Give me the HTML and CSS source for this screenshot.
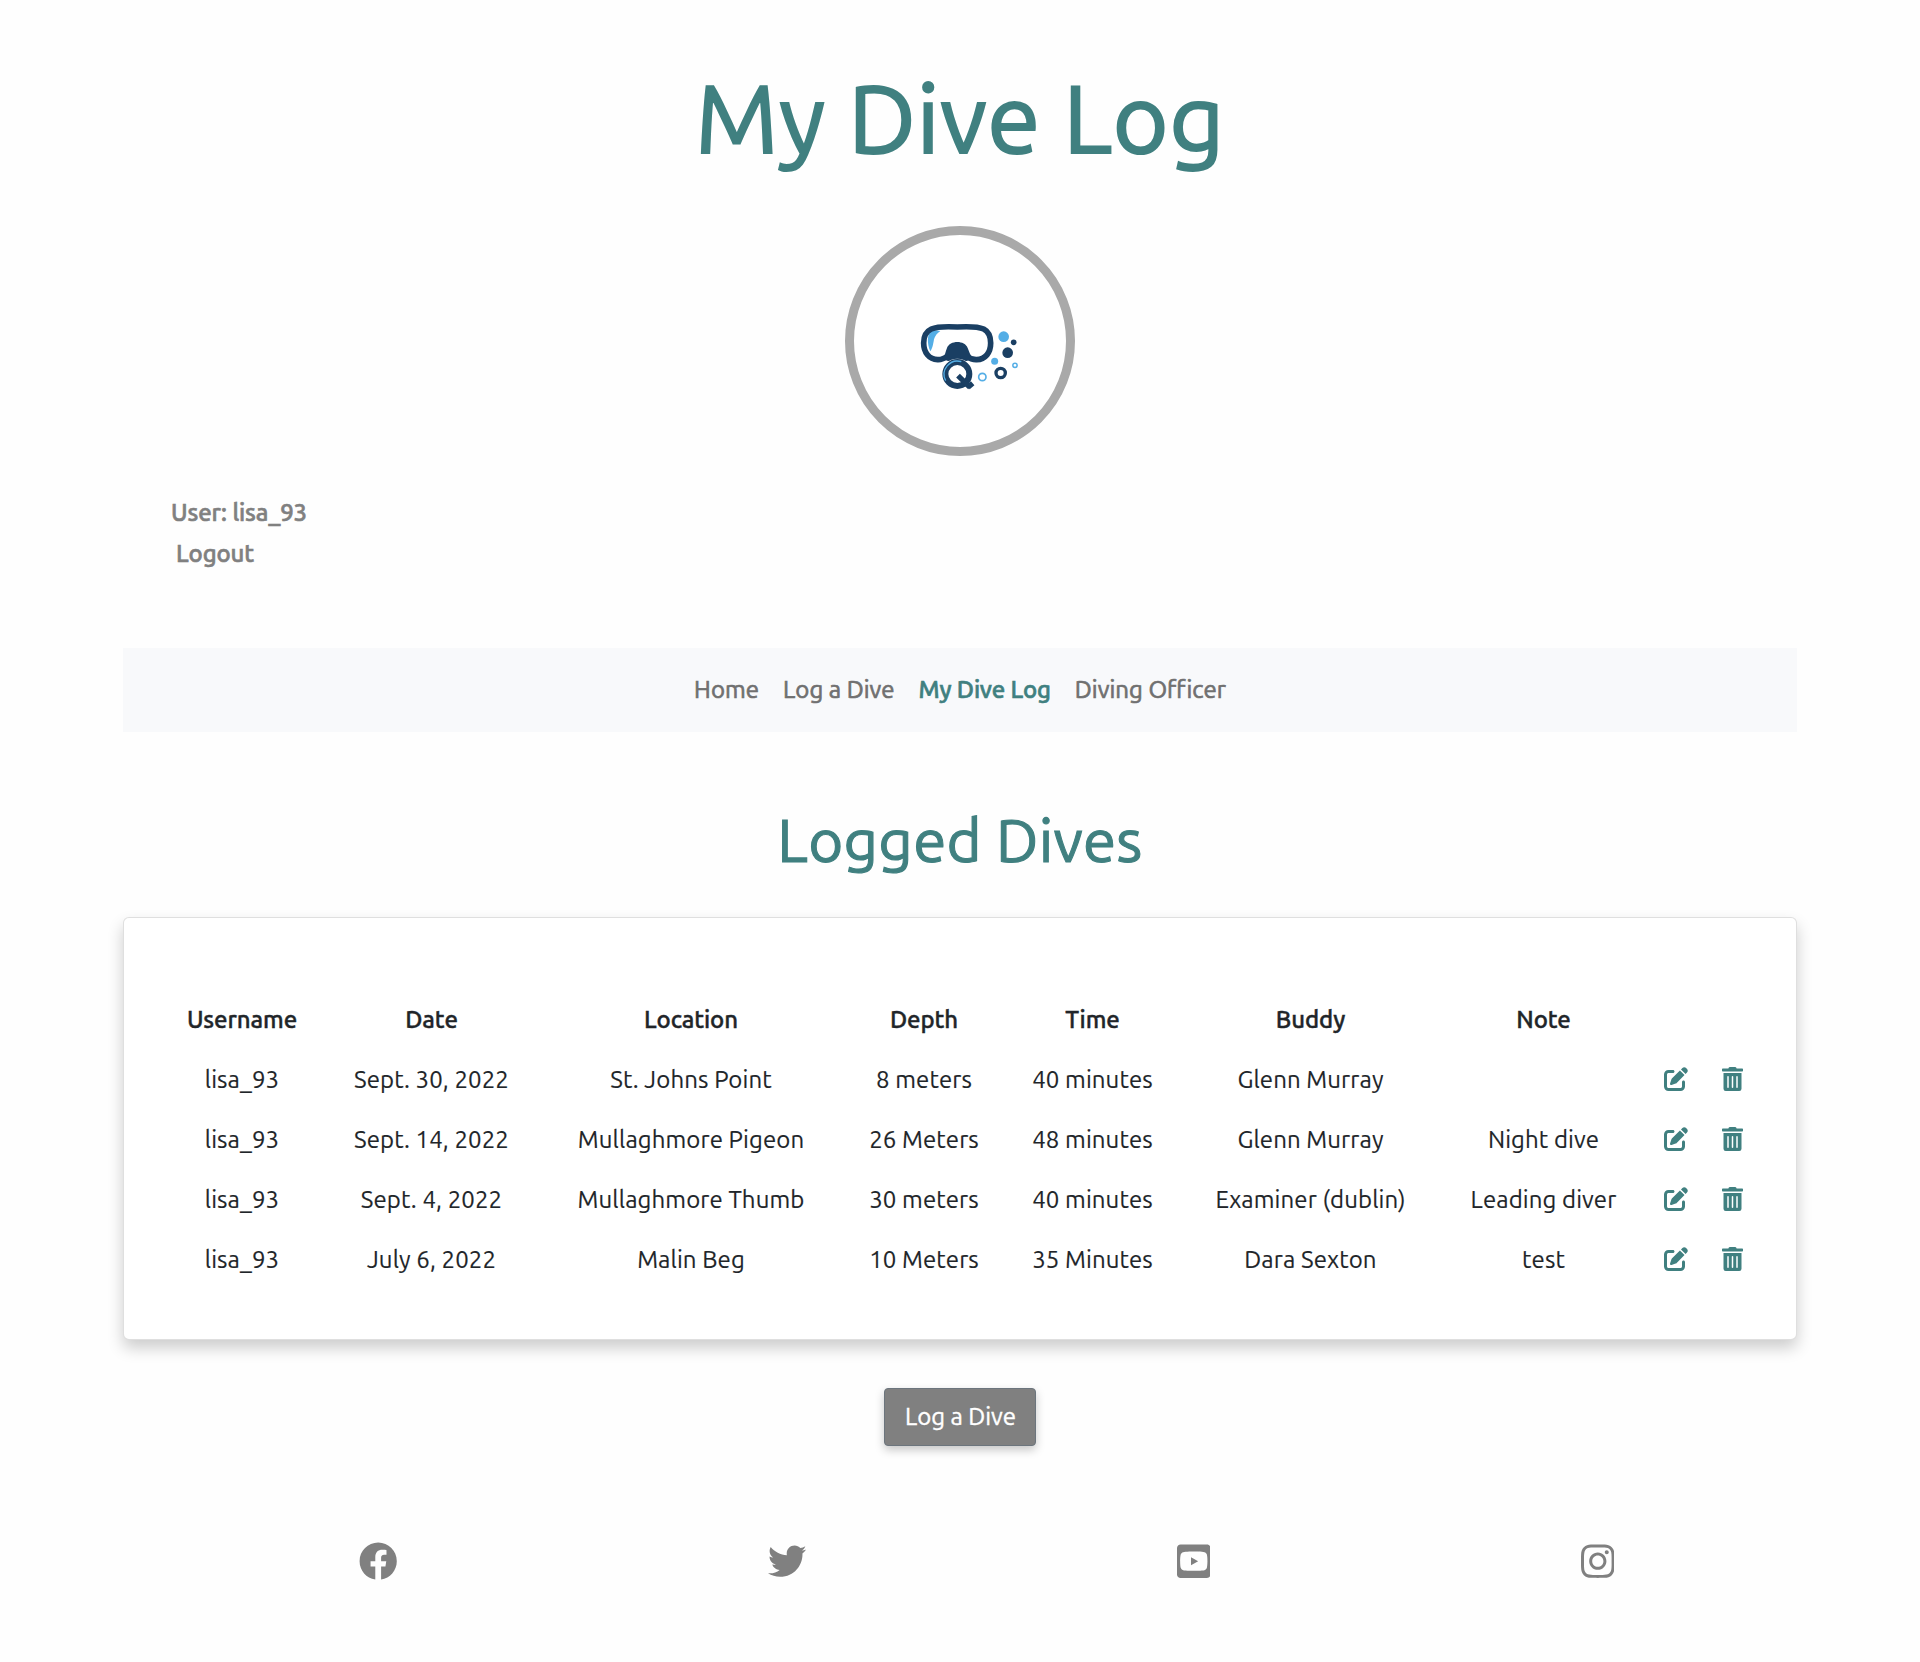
FILE: index.html
```html
<!DOCTYPE html>
<html lang="en">
<head>
<meta charset="utf-8">
<title>My Dive Log</title>
<link rel="stylesheet" href="styles.css">
</head>
<body>
<svg class="sprite" aria-hidden="true">
  <symbol id="edit" viewBox="0 0 512 512"><path d="M490.3 40.4C512.2 62.27 512.2 97.73 490.3 119.6L460.3 149.7L362.3 51.72L392.4 21.66C414.3-.2135 449.7-.2135 471.6 21.66L490.3 40.4zM172.4 241.7L339.7 74.34L437.7 172.3L270.3 339.6C264.2 345.8 256.7 350.4 248.4 353.2L159.6 382.8C150.1 385.6 141.5 383.4 135 376.1C128.6 370.5 126.4 361 129.2 352.4L158.8 263.6C161.6 255.3 166.2 247.8 172.4 241.7V241.7zM192 63.1C209.7 63.1 224 78.33 224 95.1C224 113.7 209.7 127.1 192 127.1H96C78.33 127.1 64 142.3 64 159.1V416C64 433.7 78.33 448 96 448H352C369.7 448 384 433.7 384 416V319.1C384 302.3 398.3 287.1 416 287.1C433.7 287.1 448 302.3 448 319.1V416C448 469 405 512 352 512H96C42.98 512 0 469 0 416V159.1C0 106.1 42.98 63.1 96 63.1H192z"/></symbol>
  <symbol id="trash" viewBox="0 0 448 512"><path d="M32 464a48 48 0 0 0 48 48h288a48 48 0 0 0 48-48V128H32zm272-256a16 16 0 0 1 32 0v224a16 16 0 0 1-32 0zm-96 0a16 16 0 0 1 32 0v224a16 16 0 0 1-32 0zm-96 0a16 16 0 0 1 32 0v224a16 16 0 0 1-32 0zM432 32H312l-9.4-18.7A24 24 0 0 0 281.1 0H166.8a23.72 23.72 0 0 0-21.4 13.3L136 32H16A16 16 0 0 0 0 48v32a16 16 0 0 0 16 16h416a16 16 0 0 0 16-16V48a16 16 0 0 0-16-16z"/></symbol>
</svg>

<header class="header">
  <h1 class="title">My Dive Log</h1>
  <div class="avatar">
    <svg viewBox="72 75 636 636" role="img" aria-label="Diving mask logo">
      <path fill="#54aee6" d="M301 424C291 402 291 373 303 362Q315 359 331 363Q317 372 312 388C309 406 307 416 301 424z"/>
      <path fill="none" stroke="#1a3f63" stroke-width="17" stroke-linejoin="round" d="M382 351C420 349 445 350 461 357C478 366 482 380 482 399C482 428 466 448 440 449C421 450 413 440 401 432H363C350 440 341 450 323 449C297 448 281 427 281 399C281 380 287 365 304 357C320 350 345 349 382 351z"/>
      <path fill="#1a3f63" d="M338 446C346 436 346 425 351 414C359 390 405 390 413 414C418 425 420 436 430 446L410 453L382 450L354 453z"/>
      <circle cx="382" cy="492" r="46" fill="#fff"/>
      <circle cx="382" cy="492" r="36" fill="none" stroke="#1a3f63" stroke-width="18"/>
      <path fill="none" stroke="#54aee6" stroke-width="4" d="M347 512A40 40 0 0 1 394 455"/>
      <path stroke="#1a3f63" stroke-width="16" d="M384 497L420 532M428 520L414 532"/>
      <circle cx="521" cy="380" r="16" fill="#54aee6"/>
      <circle cx="551" cy="397" r="8.500" fill="#1a3f63"/>
      <circle cx="533" cy="428" r="16" fill="#1a3f63"/>
      <circle cx="494" cy="454" r="10.500" fill="#54aee6"/>
      <circle cx="555" cy="466" r="6.500" fill="none" stroke="#54aee6" stroke-width="4.500"/>
      <circle cx="457" cy="501" r="11" fill="none" stroke="#54aee6" stroke-width="5"/>
      <circle cx="512" cy="489" r="14" fill="none" stroke="#1a3f63" stroke-width="10"/>
    </svg>
  </div>
</header>

<main class="container">
  <section class="account">
    <div class="user">User: lisa_93</div>
    <a class="logout">Logout</a>
  </section>

  <nav class="nav">
    <a class="nav-link">Home</a>
    <a class="nav-link">Log a Dive</a>
    <a class="nav-link active">My Dive Log</a>
    <a class="nav-link">Diving Officer</a>
  </nav>

  <h2 class="subtitle">Logged Dives</h2>

  <div class="card">
    <table class="dives">
      <colgroup><col class="c-user"><col class="c-date"><col class="c-location"><col class="c-depth"><col class="c-time"><col class="c-buddy"><col class="c-note"><col class="c-edit"><col class="c-trash"></colgroup>
      <thead>
        <tr><th>Username</th><th>Date</th><th>Location</th><th>Depth</th><th>Time</th><th>Buddy</th><th>Note</th><th></th><th></th></tr>
      </thead>
      <tbody>
        <tr><td>lisa_93</td><td>Sept. 30, 2022</td><td>St. Johns Point</td><td>8 meters</td><td>40 minutes</td><td>Glenn Murray</td><td></td><td><svg class="icon"><use href="#edit"/></svg></td><td><svg class="icon icon-trash"><use href="#trash"/></svg></td></tr>
        <tr><td>lisa_93</td><td>Sept. 14, 2022</td><td>Mullaghmore Pigeon</td><td>26 Meters</td><td>48 minutes</td><td>Glenn Murray</td><td>Night dive</td><td><svg class="icon"><use href="#edit"/></svg></td><td><svg class="icon icon-trash"><use href="#trash"/></svg></td></tr>
        <tr><td>lisa_93</td><td>Sept. 4, 2022</td><td>Mullaghmore Thumb</td><td>30 meters</td><td>40 minutes</td><td>Examiner (dublin)</td><td>Leading diver</td><td><svg class="icon"><use href="#edit"/></svg></td><td><svg class="icon icon-trash"><use href="#trash"/></svg></td></tr>
        <tr><td>lisa_93</td><td>July 6, 2022</td><td>Malin Beg</td><td>10 Meters</td><td>35 Minutes</td><td>Dara Sexton</td><td>test</td><td><svg class="icon"><use href="#edit"/></svg></td><td><svg class="icon icon-trash"><use href="#trash"/></svg></td></tr>
      </tbody>
    </table>
  </div>

  <div class="actions"><button class="btn">Log a Dive</button></div>
</main>

<footer class="social">
  <svg class="brand" viewBox="0 0 512 512"><path d="M504 256C504 119 393 8 256 8S8 119 8 256c0 123.78 90.69 226.38 209.25 245V327.69h-63V256h63v-54.64c0-62.15 37-96.48 93.67-96.48 27.14 0 55.52 4.84 55.52 4.84v61h-31.28c-30.8 0-40.41 19.12-40.41 38.73V256h68.78l-11 71.69h-57.78V501C413.31 482.38 504 379.78 504 256z"/></svg>
  <svg class="brand" viewBox="0 0 512 512"><path d="M459.37 151.716c.325 4.548.325 9.097.325 13.645 0 138.72-105.583 298.558-298.558 298.558-59.452 0-114.68-17.219-161.137-47.106 8.447.974 16.568 1.299 25.34 1.299 49.055 0 94.213-16.568 130.274-44.832-46.132-.975-84.792-31.188-98.112-72.772 6.498.974 12.995 1.624 19.818 1.624 9.421 0 18.843-1.3 27.614-3.573-48.081-9.747-84.143-51.98-84.143-102.985v-1.299c13.969 7.797 30.214 12.67 47.431 13.319-28.264-18.843-46.781-51.005-46.781-87.391 0-19.492 5.197-37.36 14.294-52.954 51.655 63.675 129.3 105.258 216.365 109.807-1.624-7.797-2.599-15.918-2.599-24.04 0-57.828 46.782-104.934 104.934-104.934 30.213 0 57.502 12.67 76.67 33.137 23.715-4.548 46.456-13.32 66.599-25.34-7.798 24.366-24.366 44.833-46.132 57.827 21.117-2.273 41.584-8.122 60.426-16.243-14.292 20.791-32.161 39.308-52.628 54.253z"/></svg>
  <svg class="brand brand-square" viewBox="0 0 448 512"><path d="M186.8 202.1l95.2 54.1-95.2 54.1V202.1zM448 80v352c0 26.5-21.5 48-48 48H48c-26.5 0-48-21.5-48-48V80c0-26.5 21.5-48 48-48h352c26.5 0 48 21.5 48 48zm-42 176.3s0-59.6-7.6-88.2c-4.2-15.8-16.5-28.2-32.2-32.4C337.9 128 224 128 224 128s-113.9 0-142.2 7.7c-15.7 4.2-28 16.6-32.2 32.4-7.6 28.5-7.6 88.2-7.6 88.2s0 59.6 7.6 88.2c4.2 15.8 16.5 27.7 32.2 31.9C110.1 384 224 384 224 384s113.9 0 142.2-7.7c15.7-4.2 28-16.1 32.2-31.9 7.6-28.5 7.6-88.1 7.6-88.1z"/></svg>
  <svg class="brand brand-square" viewBox="0 0 448 512"><path d="M224.1 141c-63.6 0-114.9 51.3-114.9 114.900s51.3 114.900 114.900 114.900S339 319.500 339 255.900 287.700 141 224.100 141zm0 189.600c-41.100 0-74.700-33.500-74.700-74.700s33.500-74.700 74.700-74.700 74.700 33.500 74.700 74.700-33.600 74.700-74.700 74.700zm146.400-194.300c0 14.900-12 26.800-26.800 26.800-14.900 0-26.800-12-26.800-26.800s12-26.800 26.800-26.800 26.800 12 26.800 26.800zm76.100 27.200c-1.700-35.900-9.900-67.700-36.200-93.900-26.200-26.200-58-34.400-93.900-36.200-37-2.100-147.900-2.100-184.900 0-35.800 1.700-67.600 9.900-93.900 36.100s-34.400 58-36.200 93.900c-2.100 37-2.100 147.900 0 184.900 1.700 35.900 9.900 67.700 36.200 93.900s58 34.400 93.900 36.200c37 2.100 147.900 2.100 184.900 0 35.900-1.700 67.700-9.900 93.900-36.200 26.200-26.200 34.400-58 36.200-93.900 2.100-37 2.100-147.800 0-184.800zM398.800 388c-7.800 19.600-22.900 34.700-42.600 42.600-29.500 11.700-99.500 9-132.100 9s-102.700 2.600-132.100-9c-19.600-7.800-34.700-22.900-42.600-42.600-11.700-29.500-9-99.500-9-132.100s-2.600-102.700 9-132.100c7.800-19.600 22.900-34.700 42.600-42.600 29.500-11.700 99.500-9 132.100-9s102.700-2.600 132.100 9c19.600 7.800 34.700 22.900 42.600 42.600 11.700 29.500 9 99.500 9 132.100s2.700 102.700-9 132.100z"/></svg>
</footer>
</body>
</html>
```
FILE: styles.css
```css
* { box-sizing: border-box; }

body {
  margin: 0;
  min-height: 1662px;
  background: #fefefe;
  color: #212529;
  font: 400 24px/1.5 Ubuntu, "Noto Sans", sans-serif;
}

.sprite { display: none; }

.header {
  display: flex;
  flex-direction: column;
  align-items: center;
  padding-top: 60px;
}

.title,
.subtitle {
  margin: 0;
  color: #408080;
  font-weight: 400;
  line-height: 1.2;
  text-align: center;
}

.title {
  height: 166px;
  font-size: 96px;
  letter-spacing: 0.5px;
  -webkit-text-stroke: 2px #408080;
}

.avatar {
  width: 230px;
  height: 230px;
  border: 9px solid #a9a9a9;
  border-radius: 50%;
  background: #fff;
}

.avatar svg { display: block; width: 100%; height: 100%; }

.container { width: 1674px; margin: 0 auto; }

.account {
  height: 192px;
  padding: 36px 47px 0 48px;
  color: #808080;
  font-weight: 500;
  line-height: 41px;
  letter-spacing: -0.1px;
  -webkit-text-stroke: 0.6px #808080;
}

.logout { padding-left: 5px; }

.nav {
  display: flex;
  justify-content: center;
  gap: 24px;
  height: 84px;
  padding: 24px 0;
  background: #f8f9fb;
  color: #707070;
}

.nav-link {
  letter-spacing: 0.05px;
  -webkit-text-stroke: 0.7px currentColor;
}

.nav-link.active {
  color: #408080;
  font-weight: 500;
  letter-spacing: -0.15px;
  -webkit-text-stroke: 0.6px currentColor;
}

.subtitle {
  padding-top: 72px;
  font-size: 60px;
  letter-spacing: 0.3px;
  -webkit-text-stroke: 1.1px #408080;
}

.card {
  height: 423px;
  margin-top: 41px;
  padding: 72px 46px 0;
  background: #fff;
  border: 1px solid rgba(0, 0, 0, 0.125);
  border-radius: 6px;
  box-shadow: 0 8px 16px rgba(0, 0, 0, 0.2);
}

.dives {
  width: 1579px;
  table-layout: fixed;
  border-collapse: collapse;
  text-align: center;
}

.c-user { width: 144px; }
.c-date { width: 235px; }
.c-location { width: 284px; }
.c-depth { width: 182px; }
.c-time { width: 155px; }
.c-buddy { width: 281px; }
.c-note { width: 185px; }
.c-edit { width: 79px; }
.c-trash { width: 34px; }

.dives th,
.dives td {
  height: 60px;
  padding: 0;
  vertical-align: middle;
  white-space: nowrap;
}

.dives th {
  font-weight: 500;
  letter-spacing: -0.1px;
  -webkit-text-stroke: 0.4px currentColor;
}

.dives td {
  letter-spacing: 0.1px;
  -webkit-text-stroke: 0.15px currentColor;
}

.icon {
  display: block;
  width: 24px;
  height: 24px;
  margin: -1px auto 1px;
  fill: #408080;
}

.icon-trash { width: 21px; }

.actions {
  display: flex;
  justify-content: center;
  padding-top: 48px;
}

.btn {
  width: 152px;
  height: 58px;
  padding: 0 0 1px 1px;
  border: 1px solid #6c757d;
  border-radius: 4px;
  background: #808080;
  color: #fff;
  font: inherit;
  -webkit-text-stroke: 0.4px #fff;
  box-shadow: 0 4px 10px rgba(0, 0, 0, 0.22);
}

.social {
  display: flex;
  justify-content: space-around;
  margin-top: 96px;
  padding: 0 120.500px 0 173.500px;
}

.brand {
  width: 38.4px;
  height: 38.4px;
  fill: #808080;
}

.brand-square { width: 33.6px; }
```
